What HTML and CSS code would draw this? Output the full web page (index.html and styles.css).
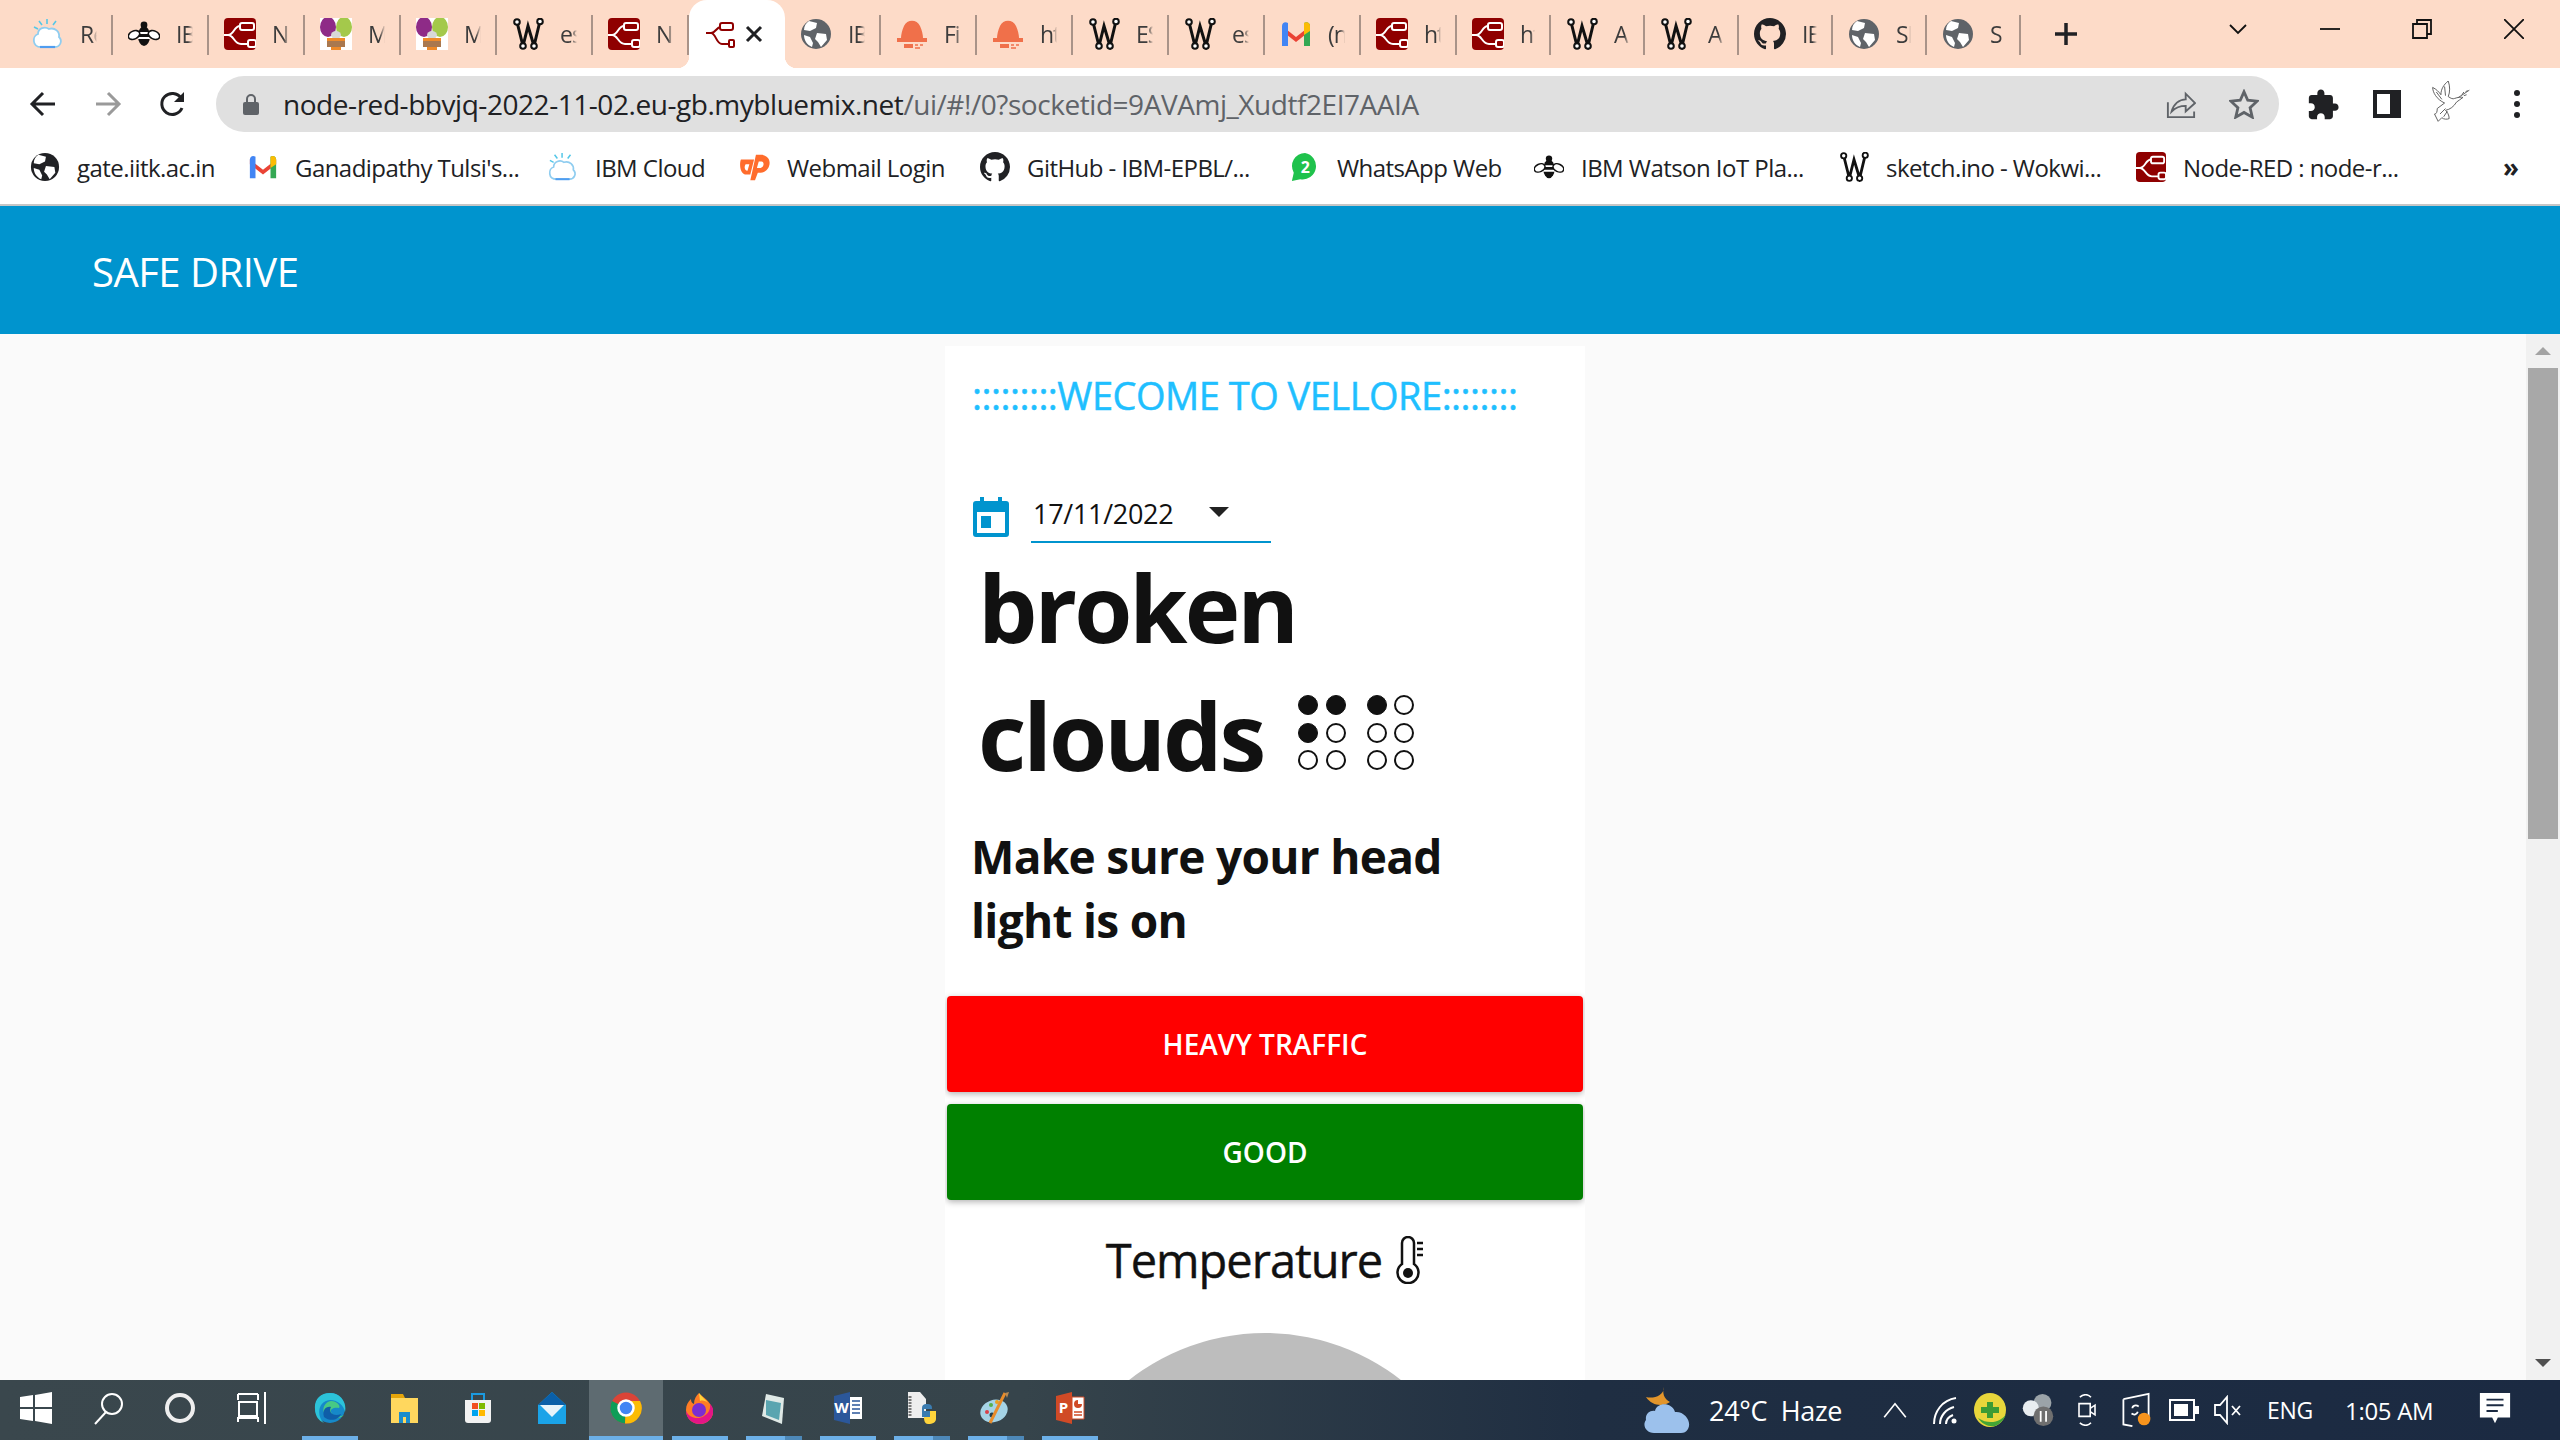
FILE: index.html
```html
<!DOCTYPE html>
<html lang="en">
<head>
    <meta charset="UTF-8">
    <title>Node-RED Dashboard</title>
    <link rel="stylesheet" href="styles.css">
</head>
<body>
    <!-- shared icons -->
    <svg class="sprite" xmlns="http://www.w3.org/2000/svg">
        <symbol id="i-nr" viewBox="0 0 32 32">
            <rect width="32" height="32" rx="4" fill="#8f0000"/>
            <path d="M0 17h4c6 0 6-9 12-9M4 17c6 0 6 9 13 9h7" fill="none" stroke="#fff" stroke-width="2"/>
            <rect x="16" y="5" width="14" height="7" rx="2" fill="#8f0000" stroke="#fff" stroke-width="2"/>
            <rect x="24" y="22" width="8" height="7" rx="2" fill="#8f0000" stroke="#fff" stroke-width="2"/>
        </symbol>
        <symbol id="i-nr-small" viewBox="0 0 32 32">
            <path d="M2 15h5c5 0 5-6 10-6M7 15c5 0 5 11 11 11h7" fill="none" stroke="#8f0000" stroke-width="2"/>
            <rect x="16" y="5" width="13" height="7" rx="2" fill="#fff" stroke="#8f0000" stroke-width="2"/>
            <rect x="25" y="22" width="5" height="7" rx="1" fill="#fff" stroke="#8f0000" stroke-width="2"/>
        </symbol>
        <symbol id="i-cloud" viewBox="0 0 32 32">
            <path d="M9 29c-9 0-9-11-3-13 0-6 7-8 11-5 6-2 11 3 10 8 4 4 1 10-4 10z" fill="#fff" stroke="#8fcdf0" stroke-width="1.8"/>
            <path d="M8 29h15" stroke="#4f9df0" stroke-width="2.2"/>
            <path d="M15 1v5M7 3l3 4M24 3l-3 4M2 9l4 2" stroke="#54c7e8" stroke-width="1.6"/>
        </symbol>
        <symbol id="i-bee" viewBox="0 0 32 32">
            <ellipse cx="16" cy="18" rx="6" ry="10" fill="#111"/>
            <path d="M10 15h12M10 20h12" stroke="#fff" stroke-width="2"/>
            <ellipse cx="6" cy="17" rx="6" ry="4" fill="#fff" stroke="#111" stroke-width="1.6" transform="rotate(-25 6 17)"/>
            <ellipse cx="26" cy="17" rx="6" ry="4" fill="#fff" stroke="#111" stroke-width="1.6" transform="rotate(25 26 17)"/>
            <circle cx="16" cy="7" r="3.4" fill="#111"/>
        </symbol>
        <symbol id="i-balloon" viewBox="0 0 32 32">
            <rect width="32" height="32" fill="#fff"/>
            <ellipse cx="8" cy="9" rx="8" ry="10" fill="#8e2b87"/>
            <ellipse cx="24" cy="9" rx="8" ry="10" fill="#a4c94b"/>
            <ellipse cx="16" cy="17" rx="5" ry="4" fill="#d8d8d8"/>
            <path d="M7 20h18v9H7z" fill="#a9784f"/>
            <path d="M7 20h18v3H7zM11 29h10v3H11z" fill="#ee8a2a"/>
        </symbol>
        <symbol id="i-wokwi" viewBox="0 0 32 32">
            <path d="M5 4l6 24 5-20 6 20 6-25" fill="none" stroke="#111" stroke-width="3"/>
            <circle cx="5" cy="4" r="2.8" fill="#fff" stroke="#111" stroke-width="2"/>
            <circle cx="28" cy="3.5" r="2.8" fill="#fff" stroke="#111" stroke-width="2"/>
            <circle cx="11" cy="28" r="2.8" fill="#fff" stroke="#111" stroke-width="2"/>
            <circle cx="22" cy="28" r="2.8" fill="#fff" stroke="#111" stroke-width="2"/>
        </symbol>
        <symbol id="i-globe" viewBox="0 0 32 32">
            <circle cx="16" cy="16" r="15" fill="currentColor"/>
            <path d="M9 3l8 2-1 5-6 3-6-1c0-4 2-7 5-9zM17 15l9 1 1 6-6 7-3-5-3-3zM4 17l6 2 3 6-1 4c-5-2-8-7-8-12z" fill="#fff"/>
        </symbol>
        <symbol id="i-bell" viewBox="0 0 32 32">
            <path d="M5 20c0-3 1-8 3-12 3-7 13-7 16 0 2 4 3 9 3 12z" fill="#f0704a"/>
            <path d="M1 20h30v4H1zM8 26h9v4H8z" fill="#f0704a"/>
            <path d="M19 27h3M24 27h3M19 30h5" stroke="#f0704a" stroke-width="1.6"/>
        </symbol>
        <symbol id="i-gmail" viewBox="0 0 32 32">
            <path d="M2 8l14 11L30 8v5L16 24 2 13z" fill="#ea4335"/>
            <path d="M2 28V8c0-3 3-5 6-3v23z" fill="#4285f4"/>
            <path d="M30 28V8c0-3-3-5-6-3v23z" fill="#34a853"/>
            <path d="M24 5c3-2 6 0 6 3v5l-6 4z" fill="#fbbc04"/>
        </symbol>
        <symbol id="i-github" viewBox="0 0 16 16">
            <path fill="currentColor" d="M8 0C3.58 0 0 3.58 0 8c0 3.54 2.29 6.53 5.47 7.59.4.07.55-.17.55-.38 0-.19-.01-.82-.01-1.49-2.01.37-2.53-.49-2.69-.94-.09-.23-.48-.94-.82-1.13-.28-.15-.68-.52-.01-.53.63-.01 1.08.58 1.23.82.72 1.21 1.87.87 2.33.66.07-.52.28-.87.51-1.07-1.78-.2-3.64-.89-3.64-3.95 0-.87.31-1.59.82-2.15-.08-.2-.36-1.02.08-2.12 0 0 .67-.21 2.2.82.64-.18 1.32-.27 2-.27.68 0 1.36.09 2 .27 1.53-1.04 2.2-.82 2.2-.82.44 1.1.16 1.92.08 2.12.51.56.82 1.27.82 2.15 0 3.07-1.87 3.75-3.65 3.95.29.25.54.73.54 1.48 0 1.07-.01 1.93-.01 2.2 0 .21.15.46.55.38A8.013 8.013 0 0016 8c0-4.42-3.58-8-8-8z"/>
        </symbol>
        <symbol id="i-cpanel" viewBox="0 0 32 32">
            <path d="M1 8h14l-4 16H7C0 24-1 13 1 8zM17 3h5c8 0 11 6 9 12-1 4-5 7-9 7h-3l-3 8h-5z" fill="#ff6c2c"/>
            <path d="M6 13h4l-2 7c-3 0-4-4-2-7zM20 10h3c3 0 3 6-1 7h-4z" fill="#fff"/>
        </symbol>
        <symbol id="i-whatsapp" viewBox="0 0 32 32">
            <path d="M16 1a14 14 0 00-12 21L2 31l9-2A14 14 0 1016 1z" fill="#1fc24c"/>
            <text x="16" y="22" text-anchor="middle" class="badge-num">2</text>
        </symbol>
    </svg>

    <div class="tabstrip">
        <div class="tab"><svg class="fav"><use href="#i-cloud"/></svg><span class="tab-title">Re</span></div>
        <div class="tab"><svg class="fav"><use href="#i-bee"/></svg><span class="tab-title">IB</span></div>
        <div class="tab"><svg class="fav"><use href="#i-nr"/></svg><span class="tab-title">N</span></div>
        <div class="tab"><svg class="fav"><use href="#i-balloon"/></svg><span class="tab-title">M</span></div>
        <div class="tab"><svg class="fav"><use href="#i-balloon"/></svg><span class="tab-title">M</span></div>
        <div class="tab"><svg class="fav"><use href="#i-wokwi"/></svg><span class="tab-title">es</span></div>
        <div class="tab"><svg class="fav"><use href="#i-nr"/></svg><span class="tab-title">N</span></div>
        <div class="tab tab-active">
            <svg class="fav"><use href="#i-nr-small"/></svg>
            <svg class="tab-close" viewBox="0 0 20 20"><path d="M3 3l14 14M17 3L3 17"/></svg>
        </div>
        <div class="tab"><svg class="fav grey"><use href="#i-globe"/></svg><span class="tab-title">IB</span></div>
        <div class="tab"><svg class="fav"><use href="#i-bell"/></svg><span class="tab-title">Fi</span></div>
        <div class="tab"><svg class="fav"><use href="#i-bell"/></svg><span class="tab-title">ht</span></div>
        <div class="tab"><svg class="fav"><use href="#i-wokwi"/></svg><span class="tab-title">ES</span></div>
        <div class="tab"><svg class="fav"><use href="#i-wokwi"/></svg><span class="tab-title">es</span></div>
        <div class="tab"><svg class="fav"><use href="#i-gmail"/></svg><span class="tab-title">(n</span></div>
        <div class="tab"><svg class="fav"><use href="#i-nr"/></svg><span class="tab-title">ht</span></div>
        <div class="tab tab-narrow"><svg class="fav"><use href="#i-nr"/></svg><span class="tab-title">ht</span></div>
        <div class="tab tab-narrow"><svg class="fav"><use href="#i-wokwi"/></svg><span class="tab-title">A</span></div>
        <div class="tab tab-narrow"><svg class="fav"><use href="#i-wokwi"/></svg><span class="tab-title">A</span></div>
        <div class="tab tab-narrow"><svg class="fav dark"><use href="#i-github"/></svg><span class="tab-title">IE</span></div>
        <div class="tab tab-narrow"><svg class="fav grey"><use href="#i-globe"/></svg><span class="tab-title">SI</span></div>
        <div class="tab tab-narrow"><svg class="fav grey"><use href="#i-globe"/></svg><span class="tab-title">S</span></div>
        <svg class="new-tab" viewBox="0 0 24 24"><path d="M12 1v22M1 12h22"/></svg>

        <div class="win-btn win-first"><svg viewBox="0 0 20 20"><path d="M2 6l8 8 8-8"/></svg></div>
        <div class="win-btn"><svg viewBox="0 0 20 20"><path d="M0 10h20"/></svg></div>
        <div class="win-btn"><svg viewBox="0 0 20 20"><path d="M1 5h14v14H1zM5 5V1h14v14h-4"/></svg></div>
        <div class="win-btn"><svg viewBox="0 0 20 20"><path d="M0 0l20 20M20 0L0 20"/></svg></div>
    </div>

    <div class="toolbar">
        <svg class="nav-icon nav-back" viewBox="0 0 28 28"><path d="M26 14H4M14 3L3 14l11 11"/></svg>
        <svg class="nav-icon nav-fwd" viewBox="0 0 28 28"><path d="M2 14h22M14 3l11 11-11 11"/></svg>
        <svg class="nav-icon nav-reload" viewBox="0 0 28 28"><path d="M23 18a10.500 10.500 0 11-1-10"/><path class="solid" d="M25 2v10H15z"/></svg>
        <div class="omnibox">
            <svg class="lock" viewBox="0 0 16 22"><path d="M4 9V6a4 4 0 018 0v3" fill="none" stroke="#5f6368" stroke-width="2"/><rect y="9" width="16" height="13" rx="2" fill="#5f6368"/></svg>
            <span class="url">node-red-bbvjq-2022-11-02.eu-gb.mybluemix.net<span class="url-rest">/ui/#!/0?socketid=9AVAmj_Xudtf2EI7AAIA</span></span>
            <svg class="omni-share" viewBox="0 0 32 32"><path d="M2 14v16h28v-6M6 24c2-8 8-13 15-13V5l10 10-10 9v-6c-6 0-11 2-15 6z"/></svg>
            <svg class="omni-star" viewBox="0 0 32 32"><path d="M16 3l4 9 10 1-7.500 7 2.300 10L16 25l-8.800 5 2.300-10L2 13l10-1z"/></svg>
        </div>
        <svg class="tool-icon tool-puzzle" viewBox="0 0 24 24"><path d="M20.500 11H19V7c0-1.100-.9-2-2-2h-4V3.500C13 2.120 11.880 1 10.500 1S8 2.120 8 3.500V5H4c-1.100 0-1.990.9-1.990 2v3.800H3.500c1.490 0 2.700 1.210 2.700 2.700s-1.210 2.700-2.700 2.700H2V20c0 1.100.9 2 2 2h3.800v-1.500c0-1.490 1.210-2.700 2.700-2.700 1.490 0 2.700 1.210 2.700 2.700V22H17c1.100 0 2-.9 2-2v-4h1.500c1.380 0 2.500-1.120 2.500-2.500S21.880 11 20.500 11z"/></svg>
        <div class="tool-side"></div>
        <svg class="tool-dove" viewBox="0 0 44 48"><path d="M15 24C6 20 2 12 2 7c4 2 7 5 9 8 0-6 3-11 8-15 2 6 2 12 0 17 3 2 5 3 7 2 3-1 7-2 9-1-2 2-5 3-7 5-3 5-7 8-12 9 2 2 4 5 4 9-2 1-6 1-8-1l-4 4-4-8c2 0 3-2 3-6z"/><path d="M30 18l12-8M34 15l2-3M38 12l2-2M36 16l3-1M6 12l6 8M15 6l1 10M10 36l6-6M14 39l4-6"/></svg>
        <div class="tool-dots"><i></i><i></i><i></i></div>
    </div>

    <div class="bookmarks">
        <div class="bm"><svg class="bm-icon dark"><use href="#i-globe"/></svg>gate.iitk.ac.in</div>
        <div class="bm"><svg class="bm-icon"><use href="#i-gmail"/></svg>Ganadipathy Tulsi's...</div>
        <div class="bm"><svg class="bm-icon"><use href="#i-cloud"/></svg>IBM Cloud</div>
        <div class="bm"><svg class="bm-icon"><use href="#i-cpanel"/></svg>Webmail Login</div>
        <div class="bm"><svg class="bm-icon dark"><use href="#i-github"/></svg>GitHub - IBM-EPBL/...</div>
        <div class="bm"><svg class="bm-icon"><use href="#i-whatsapp"/></svg>WhatsApp Web</div>
        <div class="bm"><svg class="bm-icon"><use href="#i-bee"/></svg>IBM Watson IoT Pla...</div>
        <div class="bm"><svg class="bm-icon"><use href="#i-wokwi"/></svg>sketch.ino - Wokwi...</div>
        <div class="bm"><svg class="bm-icon"><use href="#i-nr"/></svg>Node-RED : node-r...</div>
        <div class="bm-more">»</div>
    </div>

    <header class="app-header">SAFE DRIVE</header>

    <div class="app-body">
        <main class="canvas">
            <section class="card">
                <div class="welcome">:::::::::WECOME TO VELLORE::::::::</div>

                <div class="date-row">
                    <svg class="cal-icon" viewBox="0 0 36 40"><path d="M7 0h4v5H7zM25 0h4v5h-4z"/><path fill-rule="evenodd" d="M3 4h30a3 3 0 013 3v30a3 3 0 01-3 3H3a3 3 0 01-3-3V7a3 3 0 013-3zm1 11v21h28V15z"/><rect x="8" y="19" width="10" height="12"/></svg>
                    <div class="date-input">
                        <span>17/11/2022</span>
                        <i class="date-caret"></i>
                    </div>
                </div>

                <div class="weather">broken<br>clouds
                    <svg class="braille" viewBox="0 0 120 75">
                        <circle cx="10" cy="10" r="9.500"/><circle cx="38" cy="10" r="9.500"/>
                        <circle cx="10" cy="38" r="9.500"/><circle class="off" cx="38" cy="38" r="9"/>
                        <circle class="off" cx="10" cy="65" r="9"/><circle class="off" cx="38" cy="65" r="9"/>
                        <circle cx="79" cy="10" r="9.500"/><circle class="off" cx="106" cy="10" r="9"/>
                        <circle class="off" cx="79" cy="38" r="9"/><circle class="off" cx="106" cy="38" r="9"/>
                        <circle class="off" cx="79" cy="65" r="9"/><circle class="off" cx="106" cy="65" r="9"/>
                    </svg>
                </div>

                <div class="advice">Make sure your head light is on</div>

                <button class="status-btn status-red">HEAVY TRAFFIC</button>
                <button class="status-btn status-green">GOOD</button>

                <div class="temp-title">Temperature
                    <svg class="thermo" viewBox="0 0 28 48"><path d="M6 28V7a6 6 0 0112 0v21a10.500 10.500 0 11-12 0z"/><circle class="bulb" cx="12" cy="37" r="5"/><path d="M21 7h6M21 13h6M21 19h6"/></svg>
                </div>

                <div class="gauge"></div>
            </section>
        </main>

        <div class="scrollbar">
            <i class="arrow-up"></i>
            <div class="thumb"></div>
            <i class="arrow-down"></i>
        </div>
    </div>

    <footer class="taskbar">
        <div class="tb-item tb-sys"><svg viewBox="0 0 32 32" fill="#fff"><path d="M0 5l13-2v12H0zM15 3l17-3v15H15zM0 17h13v12L0 27zM15 17h17v15l-17-3z"/></svg></div>
        <div class="tb-item tb-sys"><svg viewBox="0 0 32 32" fill="none" stroke="#fff" stroke-width="2"><circle cx="20" cy="12" r="10"/><path d="M14 20L3 32"/></svg></div>
        <div class="tb-item tb-sys"><svg viewBox="0 0 32 32" fill="none" stroke="#eee" stroke-width="4"><circle cx="16" cy="16" r="13"/></svg></div>
        <div class="tb-item tb-sys tb-last-sys"><svg viewBox="0 0 32 32" fill="none" stroke="#fff" stroke-width="2"><path d="M2 2h20M2 8V2M22 8V2M3 10h18v14H3zM2 30v-4h20v4M29 0v32"/></svg></div>
        <div class="tb-item tb-open"><svg viewBox="0 0 32 32"><circle cx="16" cy="16" r="15" fill="#1689c9"/><path d="M10 31C2 24 4 9 16 8c8 0 14 6 15 12 2-9-4-19-15-19C6 1 0 8 1 17c0 7 4 12 9 14z" fill="#2cc3d9"/><path d="M30 23c-4 2-11 2-13-3-1-3 3-5 8-4 2-2-2-7-8-7-6 1-9 7-7 12 3 6 13 8 20 2z" fill="#4cd07d" opacity=".9"/><path d="M17 15c-3 5 2 10 10 7-2 6-11 8-17 3-2-7 2-11 7-10z" fill="#0f5ea8"/></svg></div>
        <div class="tb-item"><svg viewBox="0 0 32 32"><path d="M3 2h12l2 4H3z" fill="#e5a50a"/><path d="M3 6h27v25H3z" fill="#ffd75e"/><path d="M11 31V20h11v11h-4v-6h-3v6z" fill="#1b8ccd"/></svg></div>
        <div class="tb-item"><svg viewBox="0 0 32 32"><path d="M3 8h26v20a3 3 0 01-3 3H6a3 3 0 01-3-3z" fill="#f2f2f2"/><path d="M10 8V2h12v6" fill="none" stroke="#1b9ae0" stroke-width="2"/><path d="M10 11h6v6h-6z" fill="#f25022"/><path d="M17 11h6v6h-6z" fill="#7fba00"/><path d="M10 18h6v6h-6z" fill="#00a4ef"/><path d="M17 18h6v6h-6z" fill="#ffb900"/></svg></div>
        <div class="tb-item"><svg viewBox="0 0 32 32"><path d="M2 13L16 0l14 13v19H2z" fill="#1aa3e8"/><path d="M2 13L16 0l14 13z" fill="#0a5fa8"/><path d="M4 13h24L16 25z" fill="#e6f3fa"/></svg></div>
        <div class="tb-item tb-open tb-active"><svg viewBox="0 0 32 32"><circle cx="16" cy="16" r="15.500" fill="#db4437"/><path d="M16 16L2 9a15.500 15.500 0 0013 22.500z" fill="#0f9d58"/><path d="M16 9h14a15.500 15.500 0 01-15 22.500z" fill="#fbbc04"/><circle cx="16" cy="16" r="7.500" fill="#4285f4" stroke="#fff" stroke-width="2.500"/></svg></div>
        <div class="tb-item tb-open"><svg viewBox="0 0 32 32"><path d="M15 1c3 4 11 7 14 17 1 8-6 14-13 14C8 32 2 26 2 18c0-5 2-8 5-11 0 3 1 4 3 5 0-5 2-8 5-11z" fill="#ff7c25"/><path d="M16 32C8 32 2 26 2 19c3 7 12 9 18 5 4-2 7-7 6-12 3 3 3 5 3 6 1 8-6 14-13 14z" fill="#e31587"/><circle cx="15" cy="18" r="7" fill="#7b2dd0"/><path d="M15 1c3 4 7 7 9 10-2-2-5-3-8-2z" fill="#ffd43b"/></svg></div>
        <div class="tb-item tb-open tb-stack"><svg viewBox="0 0 32 32"><path d="M8 2l18 4-2 26L4 24z" fill="#dfe9e6"/><path d="M8 8l15 3-2 17-13-5z" fill="#5aa5b0"/></svg></div>
        <div class="tb-item tb-open"><svg viewBox="0 0 32 32"><path d="M2 4l16-4v32L2 28z" fill="#2b579a"/><path d="M18 5h12v22H18z" fill="#fff"/><path d="M20 9h8M20 13h8M20 17h8M20 21h8" stroke="#2b579a" stroke-width="1.500"/><text x="9.500" y="21" text-anchor="middle" class="app-letter">W</text></svg></div>
        <div class="tb-item tb-open tb-stack"><svg viewBox="0 0 32 32"><path d="M2 0h12l6 7v19H2z" fill="#eee"/><path d="M4 4v20" stroke="#777" stroke-width="3" stroke-dasharray="2 1"/><path d="M20 12c6 0 6 2 6 5h-8v2h10v7c0 3-3 5-6 5v-6h-6v-9c0-3 2-4 4-4z" fill="#3b7cb0"/><path d="M22 32c5 0 8-2 8-5v-8h-6v6h-6c0 4 1 7 4 7z" fill="#ffd43b"/></svg></div>
        <div class="tb-item tb-open tb-stack"><svg viewBox="0 0 32 32"><ellipse cx="14" cy="19" rx="14" ry="11" fill="#a5d3e6" transform="rotate(-20 14 19)"/><circle cx="7" cy="20" r="2" fill="#d9414a"/><circle cx="11" cy="13" r="2" fill="#56b04c"/><circle cx="17" cy="10" r="2" fill="#e8a020"/><circle cx="12" cy="23" r="2.500" fill="#23404f"/><path d="M10 31L25 1" stroke="#e88c2a" stroke-width="3"/><path d="M25 1l4-1-2 6z" fill="#b98a53"/></svg></div>
        <div class="tb-item tb-open"><svg viewBox="0 0 32 32"><path d="M2 4l16-4v32L2 28z" fill="#d04a26"/><path d="M18 5h12v22H18z" fill="#fff" stroke="#d04a26"/><path d="M20 20h8M20 23h8" stroke="#d04a26" stroke-width="1.500"/><path d="M24 8a4 4 0 104 4h-4z" fill="#d04a26"/><text x="9.500" y="21" text-anchor="middle" class="app-letter">P</text></svg></div>

        <div class="tray">
            <svg class="tray-weather" viewBox="0 0 48 46"><path d="M20 0c-2 6 0 12 6 15-7 5-18 4-24-5 7 2 18-1 18-10z" fill="#e2952b"/><path d="M10 46C2 46-2 38 2 33c-1-6 4-10 9-9 2-9 17-9 20 1 10-1 17 10 13 17-2 3-4 4-7 4z" fill="#9cc1ec"/></svg>
            <span class="tray-weather-text">24°C&nbsp; Haze</span>
            <svg class="tray-caret" viewBox="0 0 28 20"><path d="M2 18L14 3l12 15"/></svg>
            <svg class="tray-wifi" viewBox="0 0 26 28"><path d="M2 28C2 16 10 4 24 2M8 28c0-8 6-15 14-17M14 28c0-4 2-7 7-9"/><circle cx="22" cy="25" r="2.500" fill="#fff" stroke="none"/></svg>
            <svg class="tray-plus" viewBox="0 0 32 34"><ellipse cx="16" cy="17" rx="16" ry="17" fill="#e8d63b"/><path d="M4 25c4 6 10 9 17 8 5-2 9-6 11-12-4 7-16 12-28 4z" fill="#43a535"/><path d="M13 9h6v5h6v6h-6v5h-6v-5H7v-6h6z" fill="#3c9b34"/></svg>
            <svg class="tray-sync" viewBox="0 0 34 38"><circle cx="22" cy="11" r="10" fill="#9ba3a8"/><circle cx="9" cy="17" r="9" fill="#e8edf0"/><circle cx="23" cy="26" r="11" fill="#6f6f6f"/><path d="M20 20v12M26 20v12" stroke="#fff" stroke-width="2"/></svg>
            <svg class="tray-meet" viewBox="0 0 24 40"><path d="M3 4c5-4 10-4 14 0M3 36c5 4 10 4 14 0M2 12h14v16H2zM16 18l6-4v12l-6-4"/></svg>
            <svg class="tray-display" viewBox="0 0 32 40"><path class="frame" d="M2 8l28-6v28M2 8v28l10 2M2 36"/><path class="frame" d="M19 16c-3-2-7-1-7 2M11 24c3 2 6 1 7-2"/><circle cx="25" cy="30" r="7" fill="#f7941d"/></svg>
            <svg class="tray-battery" viewBox="0 0 30 24"><path d="M1 2h24v20H1zM27 9h2v6h-2z" fill="none" stroke="#fff" stroke-width="2"/><rect x="5" y="6" width="14" height="12" fill="#fff"/></svg>
            <svg class="tray-vol" viewBox="0 0 28 30"><path d="M1 10h5l7-8v26l-7-8H1zM18 11l8 9M26 11l-8 9"/></svg>
            <span class="tray-lang">ENG</span>
            <span class="tray-time">1:05 AM</span>
            <svg class="tray-notify" viewBox="0 0 32 36"><path d="M0 0h32v26H19l-3 6-3-6H0z" fill="#fff"/><path d="M7 7h18M7 13h18M7 19h12" stroke="#1b2a42" stroke-width="2"/></svg>
        </div>
    </footer>
</body>
</html>
```

FILE: styles.css
```css
* {
    box-sizing: border-box;
}

html, body {
    height: 100%;
}

body {
    margin: 0;
    height: 1440px;
    overflow: hidden;
    display: flex;
    flex-direction: column;
    font-family: "Open Sans", "Noto Sans", sans-serif;
    background-color: #fafafa;
    color: #111;
}

.sprite {
    display: none;
}

/* browser tabs */
.tabstrip {
    height: 68px;
    flex: none;
    display: flex;
    padding-left: 17px;
    background-color: #fddbc8;
}

.tab {
    position: relative;
    width: 96px;
    height: 68px;
    flex: none;
    display: flex;
    align-items: center;
    padding: 0 16px 0 15px;
    color: #3c3c3c;
    font-size: 23px;
    letter-spacing: -1px;
}

.tab::after {
    content: "";
    position: absolute;
    right: 0;
    top: 15px;
    width: 2px;
    height: 40px;
    background-color: #a99388;
}

.tab-narrow {
    width: 94px;
}

.tab-title {
    margin-left: 16px;
    width: 34px;
    overflow: hidden;
    white-space: nowrap;
    -webkit-mask-image: linear-gradient(90deg, #000 70%, transparent 100%);
    mask-image: linear-gradient(90deg, #000 70%, transparent 100%);
}

.fav {
    width: 32px;
    height: 32px;
    flex: none;
}

.grey {
    color: #5f6368;
}

.dark {
    color: #202124;
}

.tab-active {
    background-color: #fff;
    border-radius: 18px 18px 0 0;
}

.tab-active::after {
    display: none;
}

.tab-active::before {
    content: "";
    position: absolute;
    left: -12px;
    right: -12px;
    bottom: 0;
    height: 12px;
    z-index: 0;
    background:
        radial-gradient(circle at 0 0, #fddbc8 12px, #fff 12.500px) left / 12px 12px no-repeat,
        radial-gradient(circle at 100% 0, #fddbc8 12px, #fff 12.500px) right / 12px 12px no-repeat;
}

.tab-active .fav,
.tab-close {
    position: relative;
    z-index: 1;
}

.tab-close {
    width: 20px;
    height: 20px;
    margin-left: 8px;
    fill: none;
    stroke: #202124;
    stroke-width: 3;
}

.new-tab {
    width: 24px;
    height: 24px;
    margin: 22px 0 0 33px;
    flex: none;
    fill: none;
    stroke: #202124;
    stroke-width: 3.500;
}

.win-btn {
    width: 92px;
    height: 58px;
    flex: none;
    display: flex;
    align-items: center;
    justify-content: center;
}

.win-first {
    margin-left: auto;
}

.win-btn svg {
    width: 20px;
    height: 20px;
    fill: none;
    stroke: #111;
    stroke-width: 1.800;
}

/* address bar row */
.toolbar {
    height: 72px;
    flex: none;
    display: flex;
    align-items: flex-start;
    padding: 8px 0 0 0;
    background-color: #fff;
}

.nav-icon {
    width: 28px;
    height: 28px;
    margin-top: 14px;
    flex: none;
    fill: none;
    stroke: #202124;
    stroke-width: 3;
}

.nav-back {
    margin-left: 29px;
}

.nav-fwd {
    margin-left: 37px;
    stroke: #9a9a9a;
}

.nav-reload {
    margin-left: 37px;
}

.solid {
    fill: #202124;
    stroke: none;
}

.omnibox {
    width: 2063px;
    height: 56px;
    margin-left: 29px;
    flex: none;
    display: flex;
    align-items: center;
    padding-left: 27px;
    border-radius: 28px;
    background-color: #e0e0e0;
}

.lock {
    width: 16px;
    height: 22px;
    flex: none;
}

.url {
    margin-left: 24px;
    font-size: 28px;
    letter-spacing: -0.450px;
    white-space: nowrap;
    color: #202124;
}

.url-rest {
    color: #5f6368;
}

.omni-share {
    width: 30px;
    height: 30px;
    margin-left: auto;
    flex: none;
    fill: none;
    stroke: #5f6368;
    stroke-width: 2;
}

.omni-star {
    width: 30px;
    height: 30px;
    margin: 0 20px 0 33px;
    flex: none;
    fill: none;
    stroke: #5f6368;
    stroke-width: 3;
}

.tool-icon {
    fill: #202124;
}

.tool-puzzle {
    width: 34px;
    height: 34px;
    margin: 12px 0 0 27px;
    flex: none;
}

.tool-side {
    width: 28px;
    height: 28px;
    margin: 14px 0 0 33px;
    flex: none;
    background-color: #fff;
    border: 4px solid #202124;
    border-right-width: 11px;
}

.tool-dove {
    width: 42px;
    height: 44px;
    margin: 5px 0 0 29px;
    flex: none;
    fill: #fff;
    stroke: #555;
    stroke-width: 1;
}

.tool-dots {
    margin: 14px 0 0 42px;
    display: flex;
    flex-direction: column;
    gap: 5px;
}

.tool-dots i {
    width: 6px;
    height: 6px;
    border-radius: 50%;
    background-color: #202124;
}

/* bookmarks */
.bookmarks {
    height: 66px;
    flex: none;
    display: grid;
    grid-template-columns: 218px 300px 192px 240px 310px 244px 305px 297px 367px 1fr;
    align-items: center;
    padding: 0 0 10px 30px;
    background-color: #fff;
    border-bottom: 2px solid #c6c6c6;
    font-size: 24px;
    letter-spacing: -0.550px;
    color: #202124;
}

.bm {
    display: flex;
    align-items: center;
    white-space: nowrap;
}

.bm-icon {
    width: 30px;
    height: 30px;
    margin-right: 17px;
    flex: none;
}

.bm-more {
    font-size: 26px;
    font-weight: 700;
}

/* dashboard */
.app-header {
    height: 128px;
    flex: none;
    display: flex;
    align-items: center;
    padding: 2px 0 0 92px;
    background-color: #0094ce;
    color: #fff;
    font-size: 40px;
    letter-spacing: -0.500px;
}

.app-body {
    flex: 1;
    min-height: 0;
    display: flex;
}

.canvas {
    flex: 1;
    min-width: 0;
    padding: 12px 0 0 945px;
    overflow: hidden;
}

.card {
    width: 640px;
    height: 100%;
    overflow: hidden;
    background-color: #fff;
}

.welcome {
    margin: 25px 0 0 27px;
    height: 48px;
    line-height: 48px;
    font-size: 38px;
    font-weight: 500;
    letter-spacing: -0.500px;
    -webkit-text-stroke: 0.5px #1fbfff;
    color: #1fbfff;
    white-space: nowrap;
}

.date-row {
    height: 46px;
    margin: 78px 0 0 28px;
    display: flex;
    align-items: flex-start;
}

.cal-icon {
    width: 36px;
    height: 40px;
    flex: none;
    fill: #0094ce;
}

.date-input {
    position: relative;
    width: 240px;
    height: 46px;
    margin-left: 22px;
    padding-left: 2px;
    border-bottom: 2px solid #0094ce;
    font-size: 27px;
    line-height: 34px;
    letter-spacing: -0.300px;
}

.date-caret {
    position: absolute;
    left: 178px;
    top: 10px;
    border-style: solid;
    border-width: 10px 10px 0;
    border-color: #222 transparent transparent;
}

.weather {
    margin-left: 33px;
    font-size: 94px;
    line-height: 128px;
    font-weight: 700;
    letter-spacing: -3px;
    white-space: nowrap;
}

.braille {
    width: 120px;
    height: 75px;
    margin-left: 13px;
    overflow: visible;
    vertical-align: 1px;
    fill: #111;
    stroke: #111;
    stroke-width: 1;
}

.braille .off {
    fill: #fff;
    stroke-width: 2;
}

.advice {
    width: 540px;
    margin: 25px 0 44px 26px;
    font-size: 46px;
    line-height: 64px;
    font-weight: 700;
    letter-spacing: -0.700px;
}

.status-btn {
    display: block;
    width: 636px;
    height: 96px;
    margin: 0 2px 12px;
    padding: 0;
    border: none;
    border-radius: 4px;
    box-shadow: 0 2px 6px rgba(0, 0, 0, 0.3);
    font-family: inherit;
    font-size: 28px;
    font-weight: 600;
    color: #fff;
}

.status-red {
    background-color: #ff0000;
}

.status-green {
    background-color: #008000;
}

.temp-title {
    height: 56px;
    margin-top: 32px;
    display: flex;
    align-items: center;
    justify-content: center;
    gap: 14px;
    font-size: 47px;
    font-weight: 500;
    letter-spacing: -1px;
    -webkit-text-stroke: 0.4px #111;
    white-space: nowrap;
}

.thermo {
    width: 28px;
    height: 48px;
    flex: none;
    fill: none;
    stroke: #111;
    stroke-width: 2.500;
}

.thermo .bulb {
    fill: #111;
    stroke: none;
}

.gauge {
    width: 440px;
    height: 440px;
    margin: 45px auto 0;
    border-radius: 50%;
    background-color: #bdbdbd;
}

.scrollbar {
    position: relative;
    width: 34px;
    flex: none;
    padding: 34px 2px 0 2px;
    background-color: #f1f1f1;
}

.thumb {
    height: 471px;
    background-color: #a8a8a8;
}

.arrow-up,
.arrow-down {
    position: absolute;
    left: 9px;
    border-style: solid;
    border-color: transparent;
}

.arrow-up {
    top: 13px;
    border-width: 0 8px 8px;
    border-bottom-color: #a3a3a3;
}

.arrow-down {
    bottom: 13px;
    border-width: 8px 8px 0;
    border-top-color: #505050;
}

/* windows taskbar */
.taskbar {
    height: 60px;
    flex: none;
    display: flex;
    background: linear-gradient(90deg, #3a474d 0%, #36444b 40%, #1f2e42 62%, #1b2a42 100%);
    color: #fff;
}

.tb-item {
    position: relative;
    width: 74px;
    height: 60px;
    flex: none;
    display: flex;
    align-items: center;
    justify-content: center;
    padding-bottom: 4px;
}

.tb-sys {
    width: 72px;
}

.tb-last-sys {
    margin-right: 5px;
}

.tb-item svg {
    width: 32px;
    height: 36px;
}

.tb-open::after {
    content: "";
    position: absolute;
    left: 9px;
    right: 9px;
    bottom: 0;
    height: 4px;
    background-color: #6cb0e8;
}

.tb-stack::after {
    background: linear-gradient(90deg, #6cb0e8 70%, #4d88b8 70%);
}

.tb-active {
    background-color: #5e6b71;
}

.tb-active::after {
    left: 0;
    right: 0;
}

.app-letter {
    font-size: 15px;
    font-weight: 700;
    fill: #fff;
}

.badge-num {
    font-size: 17px;
    font-weight: 700;
    fill: #fff;
}

.tray {
    flex: 1;
    display: flex;
    align-items: center;
    font-size: 23px;
    letter-spacing: -0.300px;
    white-space: nowrap;
}

.tray svg {
    flex: none;
}

.tray-weather {
    width: 48px;
    height: 46px;
    margin-left: 537px;
}

.tray-weather-text {
    width: 170px;
    margin-left: 17px;
    font-size: 27px;
}

.tray-caret {
    width: 26px;
    height: 18px;
    margin-left: 3px;
    fill: none;
    stroke: #fff;
    stroke-width: 1.800;
}

.tray-wifi {
    width: 26px;
    height: 28px;
    margin-left: 24px;
    fill: none;
    stroke: #fff;
    stroke-width: 2;
}

.tray-plus {
    width: 32px;
    height: 34px;
    margin-left: 16px;
}

.tray-sync {
    width: 34px;
    height: 34px;
    margin-left: 15px;
}

.tray-meet {
    width: 24px;
    height: 32px;
    margin-left: 20px;
    fill: none;
    stroke: #fff;
    stroke-width: 2;
}

.tray-display {
    width: 32px;
    height: 36px;
    margin-left: 21px;
    fill: none;
}

.tray-display .frame {
    stroke: #fff;
    stroke-width: 2;
}

.tray-battery {
    width: 30px;
    height: 24px;
    margin-left: 17px;
}

.tray-vol {
    width: 28px;
    height: 30px;
    margin-left: 15px;
    fill: none;
    stroke: #fff;
    stroke-width: 1.800;
}

.tray-lang {
    width: 78px;
    margin-left: 25px;
}

.tray-time {
    width: 125px;
    font-size: 24px;
}

.tray-notify {
    width: 32px;
    height: 34px;
    margin-left: 9px;
}
```
